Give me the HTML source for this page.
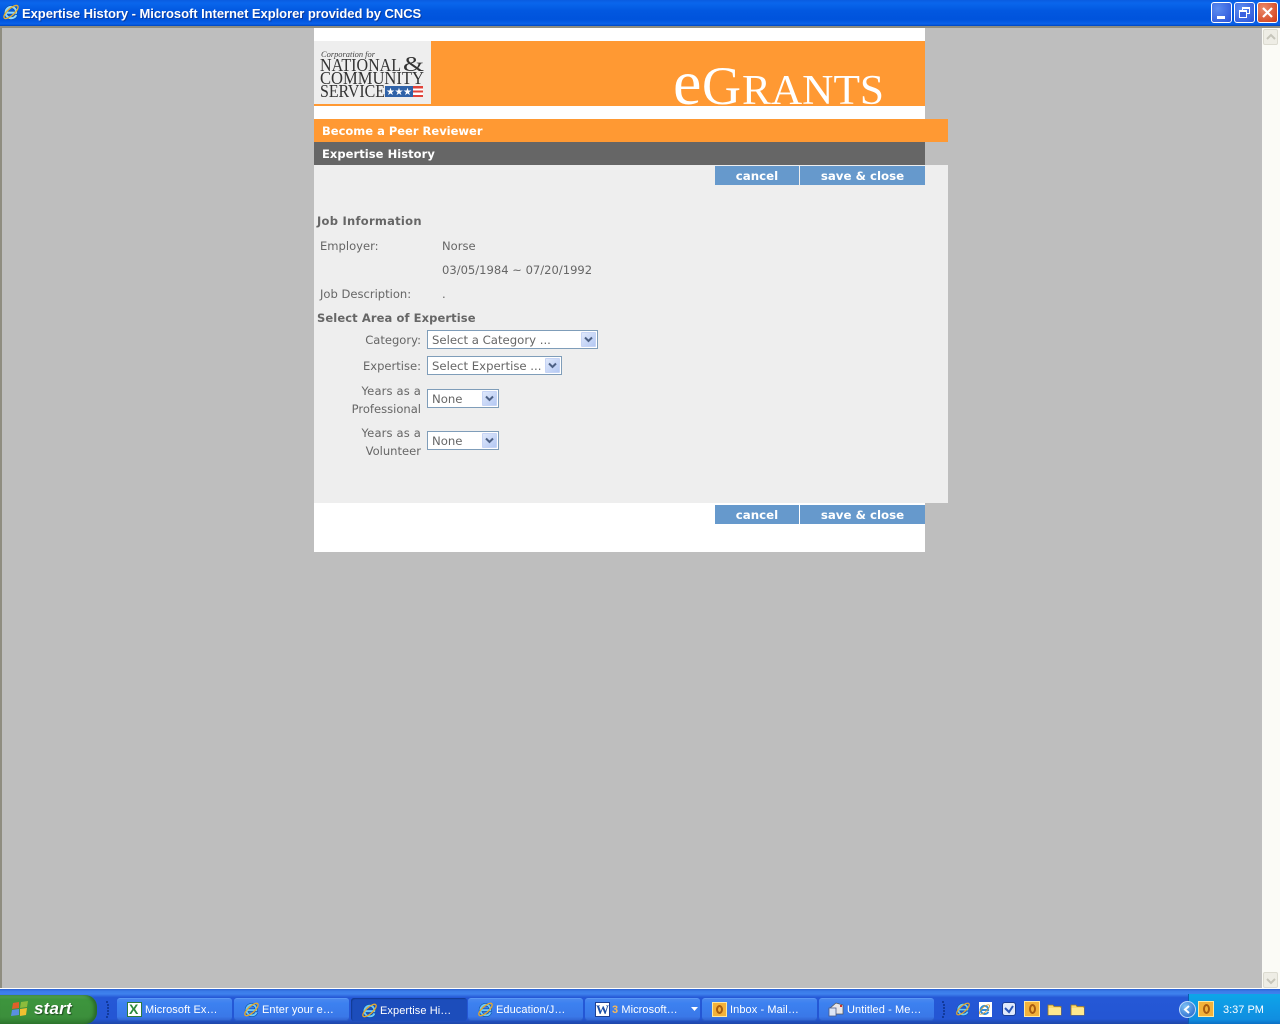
<!DOCTYPE html>
<html><head><meta charset="utf-8"><title>Expertise History</title>
<style>
html,body{margin:0;padding:0;width:1280px;height:1024px;overflow:hidden;background:#bebebe}
div,span,svg{position:absolute;box-sizing:border-box}
.t{font-family:"DejaVu Sans","Liberation Sans",sans-serif;font-size:11.55px;color:#666;white-space:nowrap;line-height:14px}
.b{font-weight:bold;font-size:11.5px}
.r{text-align:right;width:120px;left:301px}
.btn{background:#69c;color:#fff;font-weight:bold;text-align:center;height:19px;line-height:21px;font-family:"DejaVu Sans",sans-serif;font-size:11.8px;white-space:nowrap}
.sel{background:#fff;border:1px solid #7f9db9;left:427px;height:19px}
.sel span.v{left:4px;top:2px;font-family:"DejaVu Sans",sans-serif;font-size:11.7px;color:#666;line-height:15px;white-space:nowrap}
.ar{top:1px;right:1px;width:15px;height:15px;background:linear-gradient(135deg,#dfe8fb,#b4c8f3);border:1px solid #c6d4f5;border-radius:1px}
.tb{top:998px;height:23px;background:linear-gradient(#4a88ef,#3c81f0 20%,#3a78e8 80%,#2f62cf);border-radius:3px;border-top:1px solid #5a98f5;box-shadow:inset 0 -1px 0 #2a5cc4}
.tt{top:1003px;font-family:"Liberation Sans",sans-serif;font-size:11px;letter-spacing:.08px;line-height:14px;color:#fff;white-space:nowrap}
.wb{top:2px;width:21px;height:21px;border:1px solid #fff;border-radius:3px}
</style></head>
<body>
<!-- title bar -->
<div style="left:0;top:0;width:1280px;height:26px;background:linear-gradient(#0a5ce0,#0a66ec 12%,#0258e0 40%,#0053dc 75%,#0a62ea 92%,#0045bd)"></div>
<div style="left:0;top:26px;width:1280px;height:2px;background:#8f8d80"></div>
<div style="left:0;top:28px;width:2px;height:961px;background:#8f8d80"></div>
<svg style="left:2px;top:3px" width="18" height="18" viewBox="0 0 16 16"><g fill="none"><path d="M4 8.600H12.500C12.800 5.500 10.800 3.500 8.200 3.500 5.300 3.500 3.200 5.800 3.200 8.500s2.100 5 5 5c2.200 0 3.700-1 4.400-2.800" stroke="#0c4fa8" stroke-width="3"/><path d="M4 8.600H12.500C12.800 5.500 10.800 3.500 8.200 3.500 5.300 3.500 3.200 5.800 3.200 8.500s2.100 5 5 5c2.200 0 3.700-1 4.400-2.800" stroke="#8fd8ff" stroke-width="1.800"/><ellipse cx="8" cy="8" rx="8" ry="3" transform="rotate(-42 8 8)" stroke="#e8b030" stroke-width="1.200"/></g></svg>
<span style="left:22px;top:6px;font-family:'Liberation Sans',sans-serif;font-weight:bold;font-size:13px;line-height:16px;color:#fff;white-space:nowrap;text-shadow:1px 1px 0 #0a3a9e;letter-spacing:-.05px">Expertise History - Microsoft Internet Explorer provided by CNCS</span>
<div class="wb" style="left:1211px;background:radial-gradient(circle at 30% 30%,#5c8cf0,#2a52d8)"><div style="left:5px;top:13px;width:8px;height:3px;background:#fff"></div></div>
<div class="wb" style="left:1234px;background:radial-gradient(circle at 30% 30%,#5c8cf0,#2a52d8)"><div style="left:7px;top:4px;width:8px;height:7px;border:1px solid #fff;border-top-width:2px"></div><div style="left:4px;top:7px;width:8px;height:8px;border:1px solid #fff;border-top-width:2px;background:#3a62e0"></div></div>
<div class="wb" style="left:1257px;background:radial-gradient(circle at 30% 30%,#ea8a6a,#d03a14)"><svg style="left:3px;top:3px" width="13" height="13" viewBox="0 0 13 13"><path d="M2 2L11 11M11 2L2 11" stroke="#fff" stroke-width="2.200"/></svg></div>
<!-- scrollbar -->
<div style="left:1262px;top:28px;width:18px;height:960px;background:#fbfbf6"></div>
<div style="left:1263px;top:29px;width:15px;height:16px;background:#eeede5;border:1px solid #dcdbd0;border-radius:2px"><svg style="left:2px;top:3px" width="10" height="8" viewBox="0 0 10 8"><path d="M1 6L5 2L9 6" fill="none" stroke="#c6c5ba" stroke-width="2"/></svg></div>
<div style="left:1263px;top:972px;width:15px;height:16px;background:#eeede5;border:1px solid #dcdbd0;border-radius:2px"><svg style="left:2px;top:4px" width="10" height="8" viewBox="0 0 10 8"><path d="M1 2L5 6L9 2" fill="none" stroke="#c6c5ba" stroke-width="2"/></svg></div>
<!-- page -->
<div style="left:314px;top:28px;width:611px;height:524px;background:#fff"></div>
<div style="left:314px;top:41px;width:611px;height:65px;background:#f93"></div>
<div style="left:314px;top:41px;width:117px;height:63px;background:#eee"></div>
<svg style="left:314px;top:41px" width="117" height="63" viewBox="0 0 117 63">
<text x="7" y="16" font-family="Liberation Serif,serif" font-style="italic" font-size="8" fill="#444" textLength="54" lengthAdjust="spacingAndGlyphs">Corporation for</text>
<text x="6" y="30" font-family="Liberation Serif,serif" font-size="18" fill="#333" textLength="81" lengthAdjust="spacingAndGlyphs">NATIONAL</text>
<text x="89" y="30" font-family="Liberation Serif,serif" font-size="21" fill="#333" textLength="21" lengthAdjust="spacingAndGlyphs">&amp;</text>
<text x="6" y="43" font-family="Liberation Serif,serif" font-size="18" fill="#333" textLength="104" lengthAdjust="spacingAndGlyphs">COMMUNITY</text>
<text x="6" y="56" font-family="Liberation Serif,serif" font-size="18" fill="#333" textLength="65" lengthAdjust="spacingAndGlyphs">SERVICE</text>
<rect x="71" y="45" width="28" height="11" fill="#2f62a8"/>
<text x="72" y="54" font-family="DejaVu Sans,sans-serif" font-size="10" fill="#fff" textLength="26">★★★</text>
<rect x="99" y="45" width="10" height="11" fill="#fff"/><rect x="99" y="45" width="10" height="2.500" fill="#e0433a"/><rect x="99" y="49.500" width="10" height="2" fill="#e0433a"/><rect x="99" y="54" width="10" height="2" fill="#e0433a"/>
</svg>
<svg style="left:660px;top:60px" width="240" height="50" viewBox="0 0 240 50">
<text x="13" y="44" font-family="Liberation Serif,serif" font-size="64" fill="#fff">e</text>
<text x="42" y="44" font-family="Liberation Serif,serif" font-size="54" fill="#fff">G</text>
<text x="82" y="44" font-family="Liberation Serif,serif" font-size="42" fill="#fff" textLength="142" lengthAdjust="spacingAndGlyphs">RANTS</text>
</svg>
<div style="left:314px;top:119px;width:634px;height:23px;background:#f93"></div>
<span class="t b" style="left:322px;top:124px;color:#fff">Become a Peer Reviewer</span>
<div style="left:314px;top:142px;width:611px;height:23px;background:#666"></div>
<span class="t b" style="left:322px;top:147px;color:#fff;letter-spacing:.05px">Expertise History</span>
<div style="left:314px;top:165px;width:634px;height:338px;background:#eee"></div>
<div class="btn" style="left:715px;top:166px;width:84px">cancel</div>
<div class="btn" style="left:800px;top:166px;width:125px">save &amp; close</div>
<div class="btn" style="left:715px;top:505px;width:84px">cancel</div>
<div class="btn" style="left:800px;top:505px;width:125px">save &amp; close</div>

<span class="t b" style="left:317px;top:214px;letter-spacing:.27px">Job Information</span>
<span class="t" style="left:320px;top:239px">Employer:</span>
<span class="t" style="left:442px;top:239px">Norse</span>
<span class="t" style="left:442px;top:263px">03/05/1984 ~ 07/20/1992</span>
<span class="t" style="left:320px;top:287px">Job Description:</span>
<span class="t" style="left:442px;top:287px">.</span>
<span class="t b" style="left:317px;top:311px;letter-spacing:.1px">Select Area of Expertise</span>

<span class="t r" style="top:333px">Category:</span>
<span class="t r" style="top:359px">Expertise:</span>
<span class="t r" style="top:384px;letter-spacing:.15px">Years as a</span>
<span class="t r" style="top:402px">Professional</span>
<span class="t r" style="top:426px;letter-spacing:.15px">Years as a</span>
<span class="t r" style="top:444px">Volunteer</span>

<div class="sel" style="top:330px;width:171px"><span class="v">Select a Category ...</span><div class="ar"><svg style="left:2px;top:3px" width="9" height="7" viewBox="0 0 9 7"><path d="M1 1.500L4.500 5L8 1.500" fill="none" stroke="#4d6185" stroke-width="2"/></svg></div></div>
<div class="sel" style="top:356px;width:135px"><span class="v">Select Expertise ...</span><div class="ar"><svg style="left:2px;top:3px" width="9" height="7" viewBox="0 0 9 7"><path d="M1 1.500L4.500 5L8 1.500" fill="none" stroke="#4d6185" stroke-width="2"/></svg></div></div>
<div class="sel" style="top:389px;width:72px"><span class="v">None</span><div class="ar"><svg style="left:2px;top:3px" width="9" height="7" viewBox="0 0 9 7"><path d="M1 1.500L4.500 5L8 1.500" fill="none" stroke="#4d6185" stroke-width="2"/></svg></div></div>
<div class="sel" style="top:431px;width:72px"><span class="v">None</span><div class="ar"><svg style="left:2px;top:3px" width="9" height="7" viewBox="0 0 9 7"><path d="M1 1.500L4.500 5L8 1.500" fill="none" stroke="#4d6185" stroke-width="2"/></svg></div></div>

<!-- taskbar -->
<div style="left:0;top:988px;width:1280px;height:1px;background:#fff"></div>
<div style="left:0;top:989px;width:1280px;height:35px;background:linear-gradient(#2a5fd0,#3a7be8 6%,#3f82ee 14%,#2558d6 24%,#2456d4 85%,#1e46a8)"></div>
<div style="left:0;top:995px;width:97px;height:29px;background:linear-gradient(#5aa55a,#3d953d 15%,#3c8f3c 75%,#2f7a2f);border-radius:0 12px 12px 0;box-shadow:inset -3px 0 3px #2a6a2a"></div>
<svg style="left:10px;top:1000px" width="20" height="18" viewBox="0 0 20 18"><path d="M3 3L9 2V8L2 9Z" fill="#e0602a"/><path d="M11 2L18 1L17 7L10 8Z" fill="#8cbc3c"/><path d="M2 10L9 9V15L1 16Z" fill="#5a8fe0"/><path d="M10 9L17 8L16 15L10 16Z" fill="#f0c030"/></svg>
<span style="left:34px;top:999px;font-family:'Liberation Sans',sans-serif;font-weight:bold;font-style:italic;font-size:17px;line-height:20px;letter-spacing:.2px;color:#fff;text-shadow:1px 1px 1px #1d4d1d">start</span>
<svg style="left:105px;top:1000px" width="6" height="20" viewBox="0 0 6 20"><path d="M2 1v2M3 4v2M3 7v2M3 10v2M3 13v2M2 16v2" stroke="#123a9c" stroke-width="2"/></svg>

<div class="tb" style="left:117px;width:115px"></div>
<div class="tb" style="left:234px;width:115px"></div>
<div class="tb" style="left:351px;width:116px;background:#1c4dbb;box-shadow:inset 1px 1px 1px #123a92;border:0"></div>
<div class="tb" style="left:468px;width:115px"></div>
<div class="tb" style="left:585px;width:115px"></div>
<div class="tb" style="left:702px;width:115px"></div>
<div class="tb" style="left:819px;width:115px"></div>

<!-- excel -->
<div style="left:127px;top:1002px;width:15px;height:15px;background:#fff;border:1px solid #2c7a3c"></div>
<span style="left:129px;top:1002px;font-family:'Liberation Sans',sans-serif;font-weight:bold;font-size:14px;line-height:15px;color:#2c8a3c">X</span>
<span class="tt" style="left:145px">Microsoft Ex…</span>
<svg style="left:243px;top:1001px" width="17" height="17" viewBox="0 0 16 16"><g fill="none"><path d="M4 8.600H12.500C12.800 5.500 10.800 3.500 8.200 3.500 5.300 3.500 3.200 5.800 3.200 8.500s2.100 5 5 5c2.200 0 3.700-1 4.400-2.800" stroke="#0c4fa8" stroke-width="3"/><path d="M4 8.600H12.500C12.800 5.500 10.800 3.500 8.200 3.500 5.300 3.500 3.200 5.800 3.200 8.500s2.100 5 5 5c2.200 0 3.700-1 4.400-2.800" stroke="#6cc8fa" stroke-width="1.800"/><ellipse cx="8" cy="8" rx="8" ry="3" transform="rotate(-42 8 8)" stroke="#e8a828" stroke-width="1.200"/></g></svg>
<span class="tt" style="left:262px">Enter your e…</span>
<svg style="left:361px;top:1002px" width="17" height="17" viewBox="0 0 16 16"><g fill="none"><path d="M4 8.600H12.500C12.800 5.500 10.800 3.500 8.200 3.500 5.300 3.500 3.200 5.800 3.200 8.500s2.100 5 5 5c2.200 0 3.700-1 4.400-2.800" stroke="#0c4fa8" stroke-width="3"/><path d="M4 8.600H12.500C12.800 5.500 10.800 3.500 8.200 3.500 5.300 3.500 3.200 5.800 3.200 8.500s2.100 5 5 5c2.200 0 3.700-1 4.400-2.800" stroke="#6cc8fa" stroke-width="1.800"/><ellipse cx="8" cy="8" rx="8" ry="3" transform="rotate(-42 8 8)" stroke="#e8a828" stroke-width="1.200"/></g></svg>
<span class="tt" style="left:380px;top:1004px">Expertise Hi…</span>
<svg style="left:477px;top:1001px" width="17" height="17" viewBox="0 0 16 16"><g fill="none"><path d="M4 8.600H12.500C12.800 5.500 10.800 3.500 8.200 3.500 5.300 3.500 3.200 5.800 3.200 8.500s2.100 5 5 5c2.200 0 3.700-1 4.400-2.800" stroke="#0c4fa8" stroke-width="3"/><path d="M4 8.600H12.500C12.800 5.500 10.800 3.500 8.200 3.500 5.300 3.500 3.200 5.800 3.200 8.500s2.100 5 5 5c2.200 0 3.700-1 4.400-2.800" stroke="#6cc8fa" stroke-width="1.800"/><ellipse cx="8" cy="8" rx="8" ry="3" transform="rotate(-42 8 8)" stroke="#e8a828" stroke-width="1.200"/></g></svg>
<span class="tt" style="left:496px">Education/J…</span>
<!-- word -->
<div style="left:595px;top:1002px;width:15px;height:15px;background:#fff;border:1px solid #1c3f94"></div>
<span style="left:596px;top:1002px;font-family:'Liberation Serif',serif;font-weight:bold;font-size:13px;line-height:15px;color:#1c4fa8">W</span>
<span class="tt" style="left:612px"><span style="position:static;color:#f6b85a;font-weight:bold">3</span> Microsoft…</span>
<svg style="left:691px;top:1007px" width="7" height="5" viewBox="0 0 7 5"><path d="M0 0H7L3.500 4Z" fill="#fff"/></svg>
<!-- outlook -->
<div style="left:712px;top:1002px;width:15px;height:15px;background:#f3b23a;border:1px solid #ffe9a0"></div>
<div style="left:716px;top:1005px;width:7px;height:9px;border:2px solid #a85c10;border-radius:50%"></div>
<span class="tt" style="left:730px">Inbox - Mail…</span>
<!-- mail -->
<svg style="left:828px;top:1001px" width="17" height="16" viewBox="0 0 17 16"><path d="M1 8L8 2L15 4V13H7V8Z" fill="#e6e6ea" stroke="#555" stroke-width=".7"/><rect x="1" y="7" width="7" height="8" fill="#dde6f6" stroke="#4a5a88" stroke-width=".8"/><rect x="12" y="4" width="2" height="2" fill="#d03030"/></svg>
<span class="tt" style="left:847px">Untitled - Me…</span>
<svg style="left:941px;top:1000px" width="6" height="20" viewBox="0 0 6 20"><path d="M2 1v2M3 4v2M3 7v2M3 10v2M3 13v2M2 16v2" stroke="#123a9c" stroke-width="2"/></svg>
<!-- quick launch -->
<svg style="left:955px;top:1001px" width="16" height="16" viewBox="0 0 16 16"><g fill="none"><path d="M4 8.600H12.500C12.800 5.500 10.800 3.500 8.200 3.500 5.300 3.500 3.200 5.800 3.200 8.500s2.100 5 5 5c2.200 0 3.700-1 4.400-2.800" stroke="#0c4fa8" stroke-width="3"/><path d="M4 8.600H12.500C12.800 5.500 10.800 3.500 8.200 3.500 5.300 3.500 3.200 5.800 3.200 8.500s2.100 5 5 5c2.200 0 3.700-1 4.400-2.800" stroke="#6cc8fa" stroke-width="1.800"/><ellipse cx="8" cy="8" rx="8" ry="3" transform="rotate(-42 8 8)" stroke="#e8a828" stroke-width="1.200"/></g></svg>
<div style="left:979px;top:1002px;width:13px;height:15px;background:#fff"></div>
<svg style="left:978px;top:1003px" width="13" height="13" viewBox="0 0 16 16"><path d="M4 8.600H12.500C12.800 5.500 10.800 3.500 8.200 3.500 5.300 3.500 3.200 5.800 3.200 8.500s2.100 5 5 5c2.200 0 3.700-1 4.400-2.800" fill="none" stroke="#2f8fdc" stroke-width="2.400"/><ellipse cx="8" cy="8" rx="8" ry="3" transform="rotate(-42 8 8)" fill="none" stroke="#e0a030" stroke-width="1"/></svg>
<div style="left:1002px;top:1002px;width:14px;height:14px;background:#dfe9fb;border:1px solid #1c3f94;border-radius:3px"></div>
<svg style="left:1004px;top:1004px" width="10" height="10" viewBox="0 0 10 10"><path d="M1 4L5 8L9 2" fill="none" stroke="#2a56b8" stroke-width="2"/></svg>
<div style="left:1024px;top:1001px;width:16px;height:16px;background:#f3b23a;border:1px solid #ffe9a0"></div>
<div style="left:1029px;top:1004px;width:7px;height:10px;border:2px solid #a85c10;border-radius:50%"></div>
<svg style="left:1047px;top:1003px" width="16" height="13" viewBox="0 0 16 13"><path d="M1 2H6L7 3.500H14V12H1Z" fill="#fbd96e" stroke="#a07a20" stroke-width=".8"/><rect x="1.500" y="5" width="12.500" height="7" fill="#ffe88f"/></svg>
<svg style="left:1070px;top:1003px" width="16" height="13" viewBox="0 0 16 13"><path d="M1 2H6L7 3.500H14V12H1Z" fill="#fbd96e" stroke="#a07a20" stroke-width=".8"/><rect x="1.500" y="5" width="12.500" height="7" fill="#ffe88f"/></svg>
<!-- tray -->
<div style="left:1188px;top:994px;width:92px;height:30px;background:linear-gradient(#0ea5e8,#0f9ae6 40%,#108ee0 85%,#0c6ec4);border-left:1px solid #0a5cb0"></div>
<div style="left:1179px;top:1001px;width:17px;height:17px;border-radius:50%;background:radial-gradient(circle at 35% 30%,#7cc0f4,#1c5cc8);border:1px solid #bcd8fa"></div>
<svg style="left:1183px;top:1005px" width="8" height="9" viewBox="0 0 8 9"><path d="M6 1L2 4.500L6 8" fill="none" stroke="#fff" stroke-width="2"/></svg>
<div style="left:1198px;top:1001px;width:16px;height:16px;background:#f3b23a;border:1px solid #ffe9a0"></div>
<div style="left:1203px;top:1004px;width:7px;height:10px;border:2px solid #a85c10;border-radius:50%"></div>
<span style="left:1223px;top:1003px;font-family:'Liberation Sans',sans-serif;font-size:11px;line-height:14px;color:#fff;white-space:nowrap">3:37 PM</span>
</body></html>
